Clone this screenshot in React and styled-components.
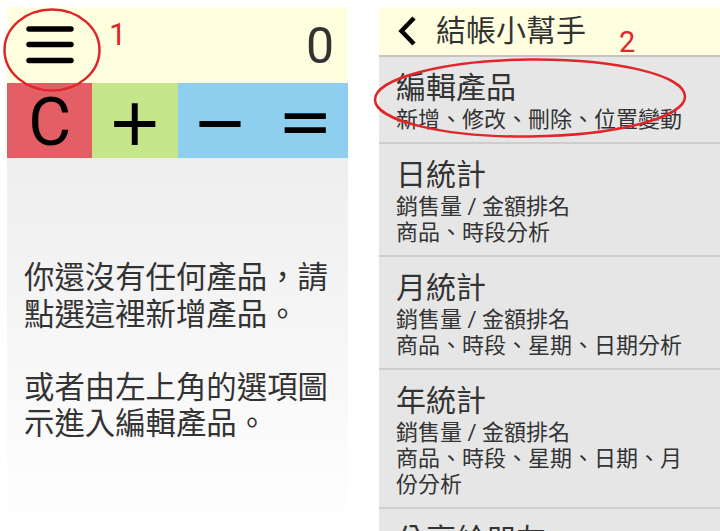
import styled, { createGlobalStyle } from "styled-components"

const GlobalStyle = createGlobalStyle`
    html, body {
        margin: 0;
        padding: 0;
        background: #ffffff;
    }
    body {
        font-family: Roboto, "Noto Sans CJK TC", sans-serif;
        color: #333333;
    }
`

const CJK = `Roboto, "Noto Sans CJK TC", sans-serif`

const menuItems = [
    { title: "編輯產品", lines: ["新增、修改、刪除、位置變動"] },
    { title: "日統計", lines: ["銷售量 / 金額排名", "商品、時段分析"] },
    { title: "月統計", lines: ["銷售量 / 金額排名", "商品、時段、星期、日期分析"] },
    { title: "年統計", lines: ["銷售量 / 金額排名", "商品、時段、星期、日期、月", "份分析"] },
    { title: "分享給朋友", lines: [] },
]

const keys = [
    { label: "C", color: "#e35f65", op: false },
    { label: "＋", color: "#c6e68b", op: true },
    { label: "－", color: "#8ecff0", op: true },
    { label: "＝", color: "#8ecff0", op: true },
]

const Hamburger = () => (
    <svg width="48" height="38" viewBox="0 0 48 38">
        <g stroke="#000" strokeWidth="5.5" strokeLinecap="round">
            <line x1="3" y1="3" x2="45" y2="3" />
            <line x1="3" y1="18.5" x2="45" y2="18.5" />
            <line x1="3" y1="34.5" x2="45" y2="34.5" />
        </g>
    </svg>
)

const Chevron = () => (
    <svg width="20" height="32" viewBox="0 0 20 32">
        <polyline points="17,3 4.5,16 17,29" fill="none" stroke="#000" strokeWidth="4.5" />
    </svg>
)

const App = () => {
    return (
        <Page>
            <GlobalStyle />
            <CalcPanel>
                <CalcHeader>
                    <Hamburger />
                    <Display>0</Display>
                </CalcHeader>
                <KeyRow>
                    {keys.map((k, i) => (
                        <Key key={i} color={k.color} op={k.op}>{k.label}</Key>
                    ))}
                </KeyRow>
                <EmptyBody>
                    <Hint>你還沒有任何產品，請</Hint>
                    <Hint>點選這裡新增產品。</Hint>
                    <Hint>&nbsp;</Hint>
                    <Hint>或者由左上角的選項圖</Hint>
                    <Hint>示進入編輯產品。</Hint>
                </EmptyBody>
            </CalcPanel>

            <MenuPanel>
                <MenuHeader>
                    <Chevron />
                    <MenuTitle>結帳小幫手</MenuTitle>
                </MenuHeader>
                {menuItems.map((item, i) => (
                    <MenuRow key={i}>
                        <RowTitle>{item.title}</RowTitle>
                        {item.lines.map((l, j) => (
                            <RowSub key={j}>{l}</RowSub>
                        ))}
                    </MenuRow>
                ))}
            </MenuPanel>

            <Circle viewBox="0 0 100 86" style={{ left: 2, top: 7, width: 100, height: 86 }}>
                <ellipse cx="50" cy="43" rx="47.5" ry="40.5" />
            </Circle>
            <Circle viewBox="0 0 320 84" style={{ left: 372, top: 57, width: 320, height: 84 }}>
                <ellipse cx="158" cy="41" rx="155" ry="38.5" transform="rotate(-0.6 158 41)" />
            </Circle>
            <Mark style={{ left: 109, top: 19 }} size={31}>1</Mark>
            <Mark style={{ left: 619, top: 28 }} size={29}>2</Mark>
        </Page>
    )
}

export default App

const Page = styled.div`
    position: relative;
    display: flex;
    gap: 31px;
    padding: 7px 0 0 7px;
    height: 524px;
    overflow: hidden;
`

// left screen
const CalcPanel = styled.div`
    width: 341px;
    flex-shrink: 0;
    display: flex;
    flex-direction: column;
`

const CalcHeader = styled.div`
    height: 76px;
    background-color: #ffffe0;
    display: flex;
    align-items: center;
    justify-content: space-between;
    padding: 0 14px 0 19px;
    box-sizing: border-box;
`

const Display = styled.div`
    font-family: Roboto, sans-serif;
    font-size: 50px;
    line-height: 1;
    color: #333;
    padding-top: 2px;
`

const KeyRow = styled.div`
    display: grid;
    grid-template-columns: repeat(4, 1fr);
    height: 75px;
`

const Key = styled.div`
    background-color: ${({ color }) => color};
    display: flex;
    align-items: center;
    justify-content: center;
    color: #000;
    font-family: ${({ op }) => (op ? `"Noto Sans CJK TC", sans-serif` : `Roboto, sans-serif`)};
    font-size: ${({ op }) => (op ? "58px" : "66px")};
    font-weight: ${({ op }) => (op ? 700 : 400)};
    line-height: 1;
    padding-top: ${({ op }) => (op ? "0" : "4px")};
`

const EmptyBody = styled.div`
    flex: 1;
    background: linear-gradient(#eeeeee, #ffffff);
    padding: 102px 0 0 17px;
`

const Hint = styled.div`
    font-family: ${CJK};
    font-size: 30.4px;
    line-height: 36.5px;
    white-space: nowrap;
    color: #333;
`

// right screen
const MenuPanel = styled.div`
    flex: 1;
    display: flex;
    flex-direction: column;
    background-color: #e6e6e6;
`

const MenuHeader = styled.div`
    height: 48px;
    flex-shrink: 0;
    background-color: #ffffe0;
    border-bottom: 2px solid #c4c4c4;
    display: flex;
    align-items: center;
    gap: 19px;
    padding-left: 18px;
`

const MenuTitle = styled.div`
    font-family: ${CJK};
    font-size: 30px;
    color: #333;
    line-height: 1;
`

const MenuRow = styled.div`
    flex-shrink: 0;
    padding: 12px 17px 9px;
    border-bottom: 2px solid #cdcdcd;
`

const RowTitle = styled.div`
    font-family: ${CJK};
    font-size: 30px;
    line-height: 38px;
    color: #333;
    white-space: nowrap;
`

const RowSub = styled.div`
    font-family: ${CJK};
    font-size: 22px;
    line-height: 26px;
    color: #333;
    white-space: nowrap;
`

// annotations
const Circle = styled.svg`
    position: absolute;
    overflow: visible;
    fill: none;
    stroke: #e1262b;
    stroke-width: 2.5;
`

const Mark = styled.div`
    position: absolute;
    font-family: Roboto, sans-serif;
    font-size: ${({ size }) => size}px;
    color: #e1262b;
    line-height: 1;
`
